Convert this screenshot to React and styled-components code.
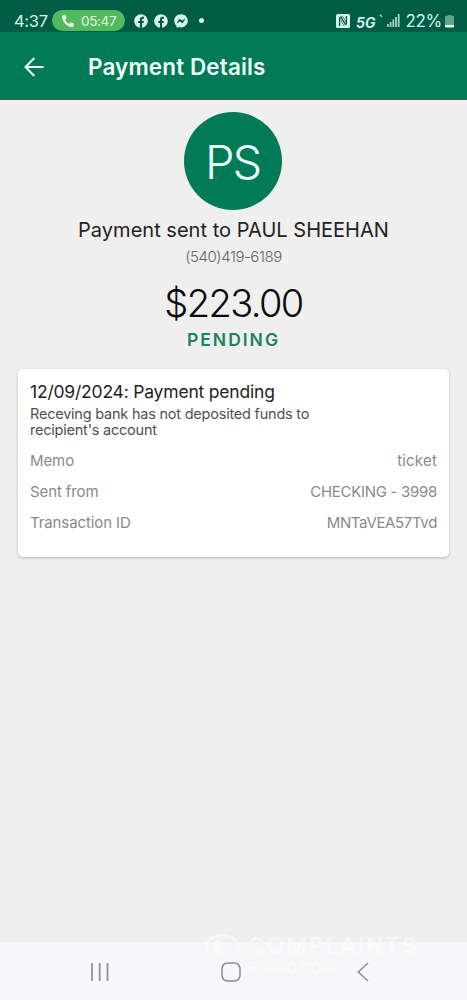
import styled, { createGlobalStyle } from "styled-components";
import { FaFacebook, FaFacebookMessenger, FaPhoneAlt } from "react-icons/fa";

const details = [
  { label: "Memo", value: "ticket", spacing: "0.2px" },
  { label: "Sent from", value: "CHECKING - 3998", spacing: "-0.3px" },
  { label: "Transaction ID", value: "MNTaVEA57Tvd", spacing: "-0.35px" },
];

export default function App() {
  return (
    <Screen>
      <GlobalStyle />
      <StatusBar>
        <Clock>4:37</Clock>
        <CallPill>
          <FaPhoneAlt size={12} />
          <span>05:47</span>
        </CallPill>
        <Notifications>
          <FaFacebook size={14} />
          <FaFacebook size={14} />
          <FaFacebookMessenger size={14} />
          <Dot />
        </Notifications>
        <StatusRight>
          <NfcIcon />
          <Network>5G</Network>
          <Tick>`</Tick>
          <SignalIcon />
          <Percent>22%</Percent>
          <BatteryIcon />
        </StatusRight>
      </StatusBar>

      <AppBar>
        <BackIcon />
        <Title>Payment Details</Title>
      </AppBar>

      <Content>
        <Avatar>PS</Avatar>
        <Recipient>Payment sent to PAUL SHEEHAN</Recipient>
        <Phone>(540)419-6189</Phone>
        <Amount>$223.00</Amount>
        <Status>PENDING</Status>

        <Card>
          <CardTitle>12/09/2024: Payment pending</CardTitle>
          <CardText>
            Receving bank has not deposited funds to
            <br />
            recipient's account
          </CardText>
          {details.map((row) => (
            <Row key={row.label}>
              <span>{row.label}</span>
              <Value $spacing={row.spacing}>{row.value}</Value>
            </Row>
          ))}
        </Card>
      </Content>

      <NavBar>
        <RecentsIcon />
        <HomeIcon />
        <NavBackIcon />
      </NavBar>

      <Watermark>
        <WatermarkLogo />
        <div>
          <WatermarkName>COMPLAINTS</WatermarkName>
          <WatermarkSub>BOARD.COM</WatermarkSub>
        </div>
      </Watermark>
    </Screen>
  );
}

function NfcIcon() {
  return (
    <svg width="14" height="14" viewBox="0 0 14 14">
      <rect width="14" height="14" rx="1.5" fill="#d8f3e8" />
      <path d="M3.6 12V3.2M4.6 2.4l5 8.4M10.4 2v8.6" fill="none" stroke="#005c45" strokeWidth="1.3" />
      <path d="M3.8 4.5l4.4 7.6M6.2 1.8l4 6.4" stroke="#005c45" strokeWidth="0.7" />
    </svg>
  );
}

function SignalIcon() {
  return (
    <svg width="13" height="13" viewBox="0 0 13 13" fill="#a6d1c2">
      <path d="M0 10h1.8v3H0zM2.7 8h1.8v5H2.7zM5.4 5.5h1.8V13H5.4zM8.1 3h1.8v10H8.1zM10.8 0h1.8v13h-1.8z" />
    </svg>
  );
}

function BatteryIcon() {
  return (
    <svg width="9" height="14" viewBox="0 0 9 14">
      <path d="M2.5 1h4v1H8q1 0 1 1v8H0V3q0-1 1-1h1.5z" fill="#66a08f" />
      <path d="M0 11h9v1.5q0 1-1 1H1q-1 0-1-1z" fill="#eafff6" />
    </svg>
  );
}

function BackIcon() {
  return (
    <svg width="20" height="20" viewBox="0 0 20 20" fill="none" stroke="#effff8" strokeWidth="2">
      <path d="M10.3 1L1.5 10l8.8 9M1.5 10H19.5" />
    </svg>
  );
}

function RecentsIcon() {
  return (
    <svg width="20" height="20" viewBox="0 0 20 20" stroke="#929295" strokeWidth="1.8">
      <path d="M2 1v18M9.7 1v18M17.5 1v18" />
    </svg>
  );
}

function HomeIcon() {
  return (
    <svg width="20" height="20" viewBox="0 0 20 20" fill="none" stroke="#8d8d90" strokeWidth="1.5">
      <rect x="1" y="1" width="18" height="18" rx="5.5" />
    </svg>
  );
}

function NavBackIcon() {
  return (
    <svg width="12" height="20" viewBox="0 0 12 20" fill="none" stroke="#8d8d90" strokeWidth="1.5">
      <path d="M11 1L1.3 10l9.7 9" />
    </svg>
  );
}

function WatermarkLogo() {
  return (
    <svg width="40" height="25" viewBox="0 0 40 25" fill="none" stroke="#fff">
      <path d="M4 17C1 7 9 1.5 19 1.5S38 7 35 17" strokeWidth="3" />
      <path d="M9 10q4-5 10-4v14q-5 0-9-4z" fill="#fff" stroke="none" />
      <path d="M15 4h16" strokeWidth="1.5" />
    </svg>
  );
}

const GlobalStyle = createGlobalStyle`
  body {
    margin: 0;
    background: #efefef;
    font-family: Inter, "Liberation Sans", sans-serif;
  }
  * {
    box-sizing: border-box;
  }
  svg {
    display: block;
    flex-shrink: 0;
  }
`;

const Screen = styled.div`
  position: relative;
  width: 467px;
  height: 1000px;
  display: flex;
  flex-direction: column;
  overflow: hidden;
  white-space: nowrap;
`;

const StatusBar = styled.header`
  height: 32px;
  padding: 9px 13px 0 14px;
  display: flex;
  align-items: center;
  background: #005c45;
  color: #d5f3e7;
`;

const Clock = styled.span`
  width: 38px;
  font-size: 16.5px;
  letter-spacing: -0.3px;
`;

const CallPill = styled.div`
  width: 73px;
  height: 21px;
  padding-left: 10px;
  display: flex;
  align-items: center;
  gap: 7px;
  border-radius: 11px;
  background: #53b95f;
  color: #e0f9df;
  font-size: 13.5px;
  letter-spacing: -0.35px;
`;

const Notifications = styled.div`
  margin-left: 9px;
  display: flex;
  align-items: center;
  gap: 6px;
`;

const Dot = styled.span`
  width: 5px;
  height: 5px;
  margin-left: 5px;
  border-radius: 50%;
  background: #e0f8ee;
`;

const StatusRight = styled.div`
  margin-left: auto;
  display: flex;
  align-items: center;
`;

const Network = styled.span`
  margin-left: 6px;
  padding-top: 4px;
  font-size: 14px;
  font-weight: 700;
  font-style: italic;
`;

const Tick = styled.span`
  width: 12px;
  padding-left: 3px;
  font-size: 15px;
  line-height: 14px;
`;

const Percent = styled.span`
  margin: 0 3px 0 5px;
  font-size: 17px;
  letter-spacing: -0.3px;
`;

const AppBar = styled.div`
  height: 68px;
  padding: 1px 25px 0 24px;
  display: flex;
  align-items: center;
  gap: 44px;
  background: #007a57;
`;

const Title = styled.h1`
  margin: 0;
  color: #effff8;
  font-size: 22.5px;
  font-weight: 600;
  letter-spacing: 0.12px;
`;

const Content = styled.main`
  flex: 1;
  padding: 12px 18px 0;
  display: flex;
  flex-direction: column;
  align-items: center;
  background: #efefef;
`;

const Avatar = styled.div`
  width: 98px;
  height: 98px;
  margin-right: 1px;
  padding-right: 1px;
  display: flex;
  align-items: center;
  justify-content: center;
  border-radius: 50%;
  background: #007a57;
  color: #effff8;
  font-size: 47px;
  font-weight: 300;
  letter-spacing: -2px;
`;

const Recipient = styled.div`
  margin-top: 7px;
  line-height: 26px;
  color: #222;
  font-size: 20px;
  letter-spacing: 0.02px;
`;

const Phone = styled.div`
  margin-top: 4px;
  line-height: 20px;
  color: #666;
  font-size: 15px;
  font-weight: 300;
  letter-spacing: -0.42px;
`;

const Amount = styled.div`
  margin-top: 14px;
  line-height: 44px;
  color: #0a0a0a;
  font-size: 38px;
  font-weight: 300;
  letter-spacing: -1.6px;
`;

const Status = styled.div`
  margin-top: 4px;
  line-height: 22px;
  color: #1b835f;
  font-size: 17.5px;
  font-weight: 600;
  letter-spacing: 2px;
`;

const Card = styled.section`
  width: 431px;
  height: 188px;
  margin-top: 18px;
  padding: 11px 12px 0;
  border-radius: 5px;
  background: #fff;
  box-shadow: 0 1px 3px rgba(0, 0, 0, 0.25);
`;

const CardTitle = styled.h2`
  margin: 0;
  line-height: 24px;
  color: #222;
  font-size: 17.5px;
  font-weight: 400;
  letter-spacing: -0.2px;
`;

const CardText = styled.p`
  margin: 2px 0 7px;
  line-height: 16px;
  color: #505050;
  font-size: 14.5px;
  letter-spacing: -0.22px;
`;

const Row = styled.div`
  height: 31px;
  display: flex;
  align-items: center;
  justify-content: space-between;
  color: #8a8a8a;
  font-size: 15px;
  letter-spacing: -0.1px;
`;

const Value = styled.span`
  letter-spacing: ${(props) => props.$spacing};
`;

const NavBar = styled.nav`
  height: 58px;
  padding: 2px 98px 0 90px;
  display: grid;
  grid-template-columns: 131px 1fr auto;
  align-items: center;
  background: #f7f7f9;
`;

/* sits over the edge between the content and the navigation bar */
const Watermark = styled.div`
  position: absolute;
  left: 203px;
  top: 934px;
  display: flex;
  gap: 5px;
  color: #fff;
  opacity: 0.5;
  pointer-events: none;
`;

const WatermarkName = styled.div`
  line-height: 24px;
  font-size: 23px;
  font-weight: 600;
  letter-spacing: 1.6px;
`;

const WatermarkSub = styled.div`
  line-height: 20px;
  font-size: 14px;
  font-weight: 600;
`;
